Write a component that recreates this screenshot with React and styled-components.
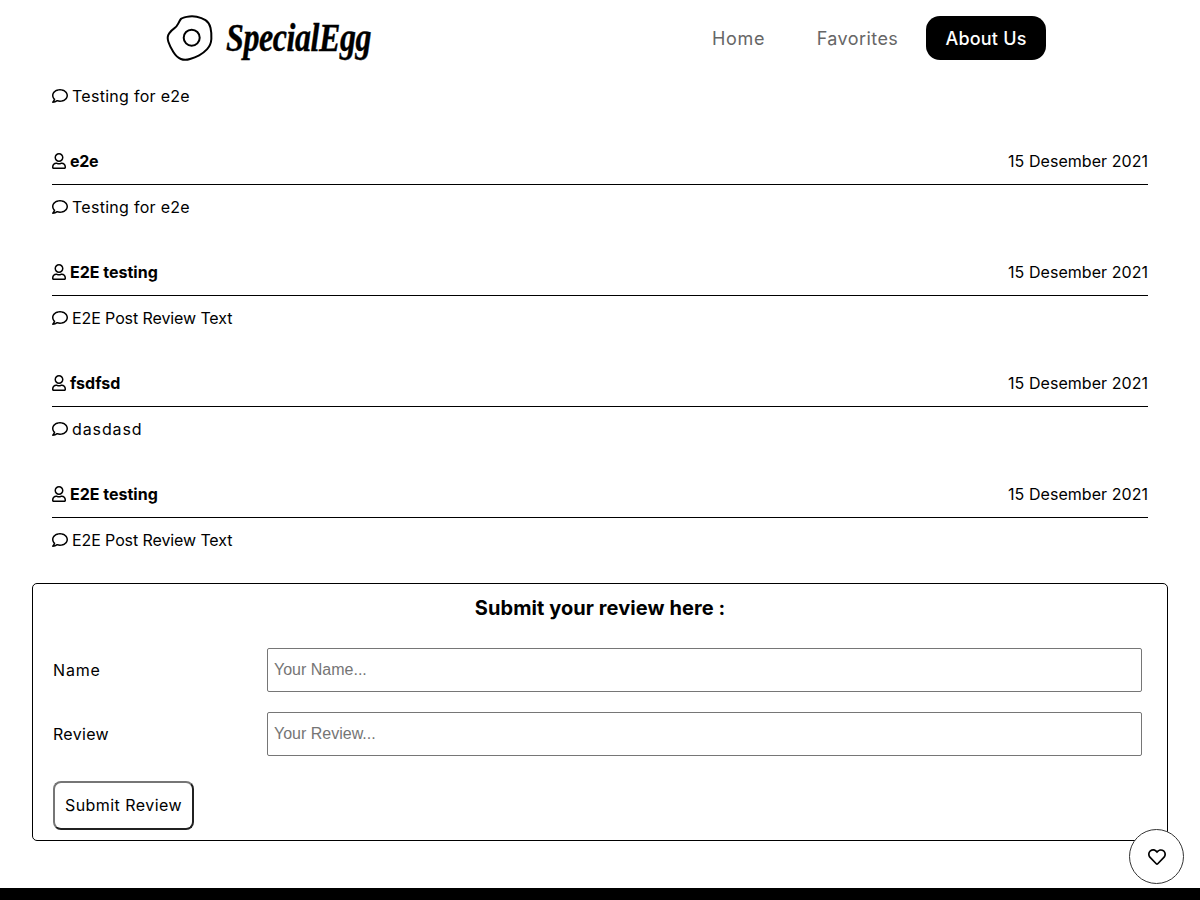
import React from "react";
import styled, { createGlobalStyle } from "styled-components";
import { FaRegComment, FaRegHeart, FaRegUser } from "react-icons/fa";

const reviews = [
  { name: "e2e", nameSpacing: -0.3, text: "Testing for e2e", textSpacing: 0.28 },
  { name: "E2E testing", nameSpacing: 0, text: "E2E Post Review Text", textSpacing: -0.1 },
  { name: "fsdfsd", nameSpacing: 0, text: "dasdasd", textSpacing: 0.9 },
  { name: "E2E testing", nameSpacing: 0, text: "E2E Post Review Text", textSpacing: -0.1 },
];

const App = () => {
  return (
    <Page>
      <GlobalStyle />
      <Navbar>
        <Brand>
          <svg width="48" height="48" viewBox="0 0 48 48" fill="none" stroke="#000" strokeWidth="2">
            <path d="M15.85 5Q16.7 4 21.7 2.85Q26.7 1.7 31.7 2.7Q36.7 3.7 40.5 6.2Q44.3 8.7 45.5 13.85Q46.7 19 46.35 25Q46 31 42.15 35.15Q38.3 39.3 34.15 41.3Q30 43.3 25 45Q20 46.7 15.85 45Q11.7 43.3 8.35 38Q5 32.7 3.35 27.7Q1.7 22.7 4.2 19.35Q6.7 16 9.2 14.35Q11.7 12.7 13.35 9.35Q15 6 15.85 5Z" />
            <circle cx="26.7" cy="23.7" r="8" />
          </svg>
          <BrandName>SpecialEgg</BrandName>
        </Brand>
        <Links>
          <NavLink $width={101} $spacing={0.7}>Home</NavLink>
          <NavLink $width={119} $spacing={0.42}>Favorites</NavLink>
          <ActiveLink>About Us</ActiveLink>
        </Links>
      </Navbar>
      <Main>
        <ReviewList>
          <Comment>
            <FaRegComment size={16} />
            <Tracked $spacing={0.28}>Testing for e2e</Tracked>
          </Comment>
          {reviews.map((review, i) => (
            <Review key={i}>
              <ReviewHead>
                <Author>
                  <FaRegUser size={16} />
                  <Tracked $spacing={review.nameSpacing}>{review.name}</Tracked>
                </Author>
                <Tracked $spacing={0.05}>15 Desember 2021</Tracked>
              </ReviewHead>
              <Comment>
                <FaRegComment size={16} />
                <Tracked $spacing={review.textSpacing}>{review.text}</Tracked>
              </Comment>
            </Review>
          ))}
        </ReviewList>
        <FormBox>
          <FormTitle>Submit your review here :</FormTitle>
          <FormRow>
            <Label $spacing={0.85}>Name</Label>
            <Input placeholder="Your Name..." />
          </FormRow>
          <FormRow>
            <Label $spacing={0.3}>Review</Label>
            <Input placeholder="Your Review..." />
          </FormRow>
          <SubmitButton>Submit Review</SubmitButton>
        </FormBox>
      </Main>
      <Footer />
      <FavButton>
        <FaRegHeart size={18} />
      </FavButton>
    </Page>
  );
};

export default App;

const GlobalStyle = createGlobalStyle`
  html, body {
    margin: 0;
    background: #fff;
    color: #000;
    font-family: "Inter", "Liberation Sans", sans-serif;
    font-size: 16px;
    overflow: hidden;
  }
`;
const Page = styled.div`
  display: flex;
  flex-direction: column;
  height: 900px;
  overflow: hidden;
`;
const Navbar = styled.nav`
  flex: none;
  display: flex;
  align-items: center;
  justify-content: space-between;
  height: 76px;
  padding: 0 154px 0 165px;
  margin-bottom: 8px;
`;
const Brand = styled.div`
  display: flex;
  align-items: center;
  gap: 13px;
`;
const BrandName = styled.div`
  font-family: "Liberation Serif", serif;
  font-style: italic;
  font-weight: 700;
  font-size: 39px;
  line-height: 48px;
  letter-spacing: -0.5px;
  -webkit-text-stroke: 0.4px #000;
  transform: scaleX(0.82);
  transform-origin: left center;
`;
const Links = styled.div`
  display: flex;
  align-items: center;
`;
const NavLink = styled.a`
  width: ${(p) => p.$width}px;
  margin-right: 9px;
  text-align: center;
  font-size: 18px;
  letter-spacing: ${(p) => p.$spacing}px;
  color: #666;
`;
const ActiveLink = styled.a`
  display: flex;
  align-items: center;
  justify-content: center;
  width: 120px;
  height: 44px;
  border-radius: 14px;
  background: #000;
  color: #fff;
  font-size: 18px;
  font-weight: 500;
  letter-spacing: 0.2px;
`;
const Main = styled.main`
  flex: none;
  padding: 0 32px;
`;
const ReviewList = styled.div`
  display: flex;
  flex-direction: column;
  gap: 41px;
  padding: 0 20px;
  margin-bottom: 31px;
`;
const Review = styled.section`
  display: flex;
  flex-direction: column;
`;
const ReviewHead = styled.div`
  display: flex;
  justify-content: space-between;
  align-items: center;
  height: 24px;
  padding-bottom: 11px;
  border-bottom: 1px solid #000;
  margin-bottom: 10px;
`;
const Tracked = styled.span`
  letter-spacing: ${(p) => p.$spacing}px;
`;
const Author = styled.div`
  display: flex;
  align-items: center;
  gap: 3px;
  font-weight: 700;
  svg {
    margin-left: -1px;
  }
`;
const Comment = styled.div`
  display: flex;
  align-items: center;
  gap: 4px;
  height: 24px;
`;
const FormBox = styled.form`
  display: flex;
  flex-direction: column;
  align-items: flex-start;
  height: 258px;
  box-sizing: border-box;
  padding: 11px 25px 0 20px;
  border: 1px solid #000;
  border-radius: 5px;
  margin-bottom: 47px;
`;
const FormTitle = styled.div`
  align-self: stretch;
  padding-left: 5px;
  margin-bottom: 26px;
  text-align: center;
  line-height: 27px;
  font-size: 20px;
  font-weight: 700;
  letter-spacing: 0.08px;
`;
const FormRow = styled.div`
  display: grid;
  grid-template-columns: 214px 1fr;
  align-items: center;
  align-self: stretch;
  margin-bottom: 20px;
  &:nth-of-type(3) {
    margin-bottom: 25px;
  }
`;
const Label = styled.label`
  letter-spacing: ${(p) => p.$spacing}px;
`;
const Input = styled.input`
  box-sizing: border-box;
  height: 44px;
  padding: 0 6px;
  border: 1px solid #767676;
  border-radius: 2px;
  font-family: "Liberation Sans", sans-serif;
  font-size: 16px;
`;
const SubmitButton = styled.button`
  width: 141px;
  height: 49px;
  padding: 0 0 2px;
  border: 2px outset #767676;
  border-radius: 8px;
  background: #fff;
  color: #000;
  font-family: "Inter", sans-serif;
  font-size: 16px;
  letter-spacing: 0.45px;
`;
const Footer = styled.footer`
  flex: none;
  height: 12px;
  background: #000;
`;
const FavButton = styled.button`
  position: fixed;
  right: 16px;
  bottom: 16px;
  display: flex;
  align-items: center;
  justify-content: center;
  width: 55px;
  height: 55px;
  padding: 0;
  border: 1px solid #333;
  border-radius: 50%;
  background: #fff;
  color: #000;
`;
